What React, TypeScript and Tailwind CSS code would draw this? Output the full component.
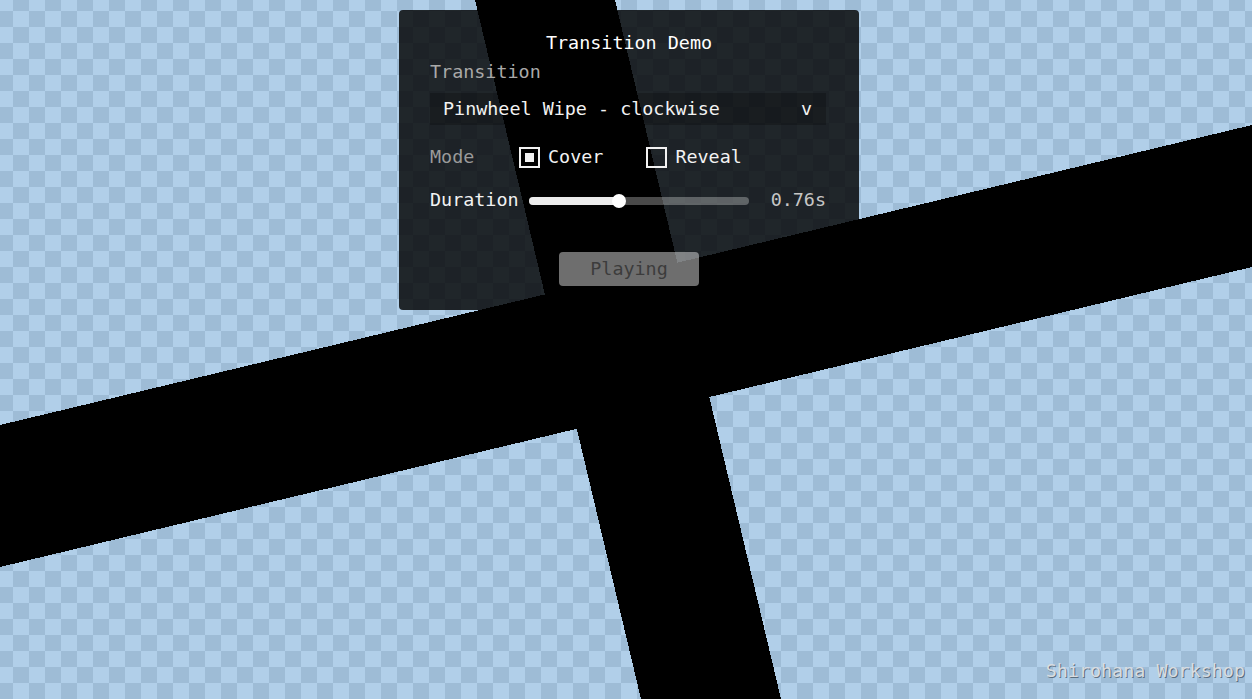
import React, { useState } from "react";

const MONO = "[font-family:'DejaVu_Sans_Mono',monospace]";

// Stage drawing: checkerboard backdrop with the two crossing wipe blades.
function Stage() {
  return (
    <svg
      className="absolute inset-0"
      width={1252}
      height={699}
      viewBox="0 0 1252 699"
      shapeRendering="crispEdges"
    >
      <defs>
        <pattern id="checker" x="13" y="11" width="32" height="32" patternUnits="userSpaceOnUse">
          <rect x="0" y="0" width="32" height="32" fill="#9ebcd6" />
          <rect x="0" y="0" width="16" height="16" fill="#b1cfe9" />
          <rect x="16" y="16" width="16" height="16" fill="#b1cfe9" />
        </pattern>
      </defs>
      <rect x="0" y="0" width="1252" height="699" fill="url(#checker)" />
      <polygon points="475,0 615,0 781,699 641,699" fill="#000" />
      <polygon points="0,425 1252,125 1252,267 0,567" fill="#000" />
    </svg>
  );
}

function Checkbox({ checked, label, onClick }: { checked: boolean; label: string; onClick: () => void }) {
  return (
    <button type="button" onClick={onClick} className="flex items-center gap-[8px]">
      <span className="flex h-[21px] w-[21px] items-center justify-center border-2 border-[#f2f2f2]">
        {checked && <span className="h-[9px] w-[9px] bg-[#f2f2f2]" />}
      </span>
      <span className="text-[#f2f2f2]">{label}</span>
    </button>
  );
}

export default function App() {
  const [mode, setMode] = useState<"cover" | "reveal">("cover");
  const duration = 0.76;
  const pct = 41;

  return (
    <div className={`relative h-[699px] w-[1252px] overflow-hidden ${MONO} text-[18.4px] leading-[22px]`}>
      <Stage />

      <div className="relative flex justify-center pl-[6px] pt-[10px]">
        <div className="flex h-[300px] w-[460px] flex-col rounded-[4px] bg-[rgba(0,0,0,0.82)] pl-[31px] pr-[33px] pt-[22px]">
          <div className="pl-[2px] text-center text-white">Transition Demo</div>

          <div className="mt-[7px] text-[#a9a9a9]">Transition</div>

          <div className="mt-[10px] flex h-[32px] items-center justify-between bg-[rgba(0,0,0,0.22)] pl-[13px] pr-[14px] text-[#f2f2f2]">
            <span>Pinwheel Wipe - clockwise</span>
            <span>v</span>
          </div>

          <div className="mt-[21px] flex h-[22px] items-center">
            <span className="w-[89px] text-[#9a9a9a]">Mode</span>
            <Checkbox checked={mode === "cover"} label="Cover" onClick={() => setMode("cover")} />
            <span className="w-[43px]" />
            <Checkbox checked={mode === "reveal"} label="Reveal" onClick={() => setMode("reveal")} />
          </div>

          <div className="mt-[21px] flex h-[22px] items-center">
            <span className="text-[#f2f2f2]">Duration</span>
            <div className="relative ml-[10px] mt-[2px] h-[8px] w-[220px] rounded-full bg-[rgba(255,255,255,0.29)]">
              <div className="h-full rounded-full bg-[#ececec]" style={{ width: `${pct}%` }} />
              <div
                className="absolute top-1/2 h-[14px] w-[14px] -translate-x-1/2 -translate-y-1/2 rounded-full bg-white"
                style={{ left: `${pct}%` }}
              />
            </div>
            <span className="ml-auto text-[#c6c6c6]">{duration.toFixed(2)}s</span>
          </div>

          <div className="mt-[41px] flex justify-center pl-[2px]">
            <button
              type="button"
              disabled
              className="flex h-[34px] w-[140px] items-center justify-center rounded-[4px] bg-[rgba(255,255,255,0.43)] text-[#3c3c3c]"
            >
              Playing
            </button>
          </div>
        </div>
      </div>

      <div className="absolute bottom-[17px] right-[7px] text-[#d8dce0] [text-shadow:1px_1px_0_rgba(30,40,50,0.55)]">
        Shirohana Workshop
      </div>
    </div>
  );
}
